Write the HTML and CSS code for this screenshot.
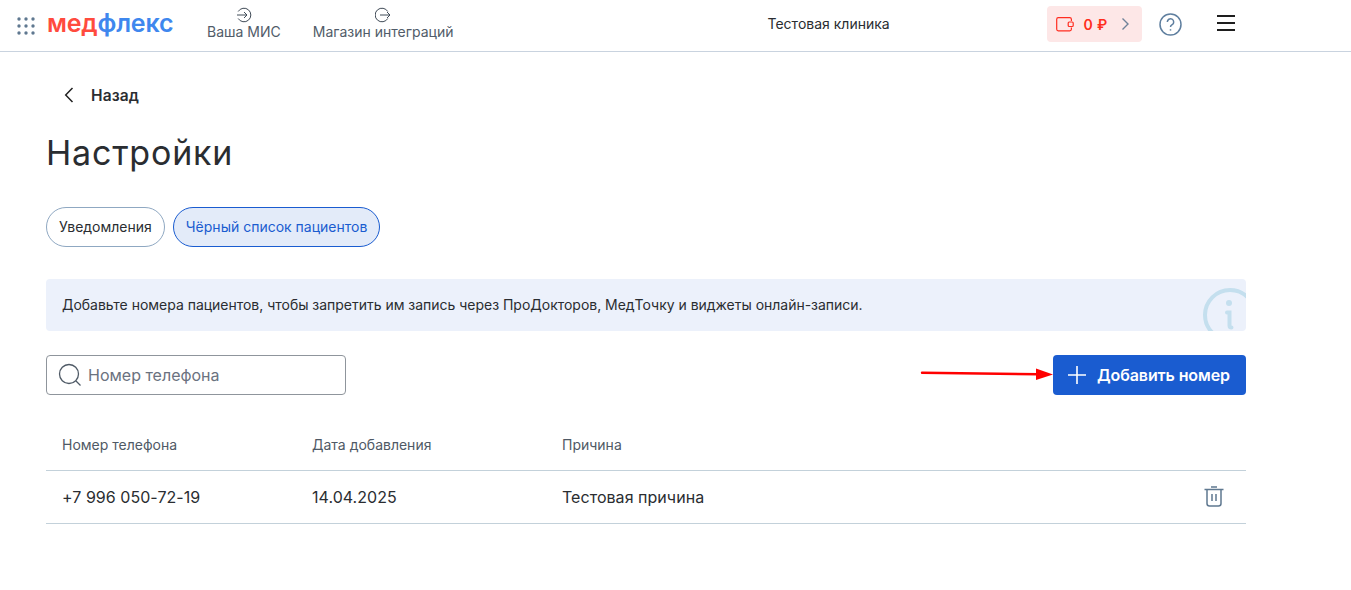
FILE: index.html
```html
<!DOCTYPE html>
<html lang="ru">
<head>
<meta charset="utf-8">
<title>Настройки</title>
<link rel="stylesheet" href="styles.css">
</head>
<body>
<header class="topbar">
  <div class="brand">
    <svg class="apps" width="18" height="18" viewBox="0 0 18 18"><g fill="#5f7890"><circle cx="2" cy="2" r="1.7"/><circle cx="9" cy="2" r="1.7"/><circle cx="16" cy="2" r="1.7"/><circle cx="2" cy="9" r="1.7"/><circle cx="9" cy="9" r="1.7"/><circle cx="16" cy="9" r="1.7"/><circle cx="2" cy="16" r="1.7"/><circle cx="9" cy="16" r="1.7"/><circle cx="16" cy="16" r="1.7"/></g></svg>
    <div class="logo"><span class="logo-red">мед</span><span class="logo-blue">флекс</span></div>
  </div>
  <nav class="nav">
    <a class="nav-item nav-mis">
      <svg width="16" height="16" viewBox="0 0 16 16" fill="none" stroke="#3f4a56" stroke-width="1"><path d="M2.200 4.500A6.800 6.800 0 1 1 2.200 11.500"/><path d="M1 8h10M8 5l3 3-3 3"/></svg>
      <span>Ваша МИС</span>
    </a>
    <a class="nav-item">
      <svg width="16" height="16" viewBox="0 0 16 16" fill="none" stroke="#3f4a56" stroke-width="1"><path d="M12.800 4.500A6.800 6.800 0 1 0 12.800 11.500"/><path d="M5 8h10M12 5l3 3-3 3"/></svg>
      <span>Магазин интеграций</span>
    </a>
  </nav>
  <div class="clinic">Тестовая клиника</div>
  <div class="balance">
    <svg width="18" height="15" viewBox="0 0 18 15" fill="none" stroke="#ff2d20" stroke-width="1.200"><path d="M15.400 4V2.200A1.600 1.600 0 0 0 13.800.7H2.200A1.600 1.600 0 0 0 .7 2.200v10.100a1.600 1.600 0 0 0 1.500 1.500h11.600a1.600 1.600 0 0 0 1.600-1.500V10.500"/><rect x="12.200" y="5" width="5" height="4.500" rx="1"/></svg>
    <span class="amount">0 ₽</span>
    <svg width="9" height="14" viewBox="0 0 9 14" fill="none" stroke="#6f8299" stroke-width="1.400"><path d="M1.500 1.500 7 7l-5.500 5.500"/></svg>
  </div>
  <svg class="help" width="23" height="23" viewBox="0 0 23 23" fill="none" stroke="#5f7f9f" stroke-width="1.500"><circle cx="11.500" cy="11.500" r="10.500"/><path d="M8.300 9a3.200 3.200 0 1 1 4.900 2.700c-1 .6-1.700 1.200-1.700 2.300"/><path d="M11.500 16.200v1.400"/></svg>
  <div class="burger"><i></i><i></i><i></i></div>
</header>

<main class="page">
  <a class="back">
    <svg width="10" height="16" viewBox="0 0 10 16" fill="none" stroke="#222" stroke-width="1.500"><path d="M8.500 1 1.700 8l6.800 7"/></svg>
    <span>Назад</span>
  </a>
  <h1 class="title">Настройки</h1>
  <div class="tabs">
    <button class="tab">Уведомления</button>
    <button class="tab tab-active">Чёрный список пациентов</button>
  </div>
  <div class="notice">
    <span>Добавьте номера пациентов, чтобы запретить им запись через ПроДокторов, МедТочку и виджеты онлайн-записи.</span>
    <svg class="notice-icon" width="44" height="52" viewBox="0 0 44 52" fill="none" stroke="#c4dfee" stroke-width="4"><circle cx="28" cy="36" r="25"/><circle cx="27" cy="24" r="3" fill="#c4dfee" stroke="none"/><path d="M25 33.500h2.500v13q0 2 2 2" stroke-linecap="round"/></svg>
  </div>
  <div class="toolbar">
    <label class="search">
      <svg width="24" height="24" viewBox="0 0 24 24" fill="none" stroke="#4f5a66" stroke-width="1.300"><circle cx="11" cy="11" r="9.500"/><path d="m18 18 4.500 4.500"/></svg>
      <span>Номер телефона</span>
    </label>
    <button class="add">
      <svg width="18" height="18" viewBox="0 0 18 18" stroke="#fff" stroke-width="1.600"><path d="M9 0v18M0 9h18"/></svg>
      <span>Добавить номер</span>
    </button>
  </div>
  <div class="table">
    <div class="row row-head">
      <div>Номер телефона</div><div>Дата добавления</div><div>Причина</div><div></div>
    </div>
    <div class="row row-body">
      <div>+7 996 050-72-19</div><div>14.04.2025</div><div>Тестовая причина</div>
      <div class="cell-action">
        <svg width="20" height="21" viewBox="0 0 20 21" fill="none" stroke="#5f7890" stroke-width="1.500"><path d="M.5 3.500h19M7 1h6"/><path d="M3 3.500v14a2.500 2.500 0 0 0 2.500 2.500h9a2.500 2.500 0 0 0 2.500-2.500v-14"/><path d="M8 8v7M12 8v7"/></svg>
      </div>
    </div>
  </div>
  <svg class="arrow" width="134" height="14" viewBox="0 0 134 14"><path d="M2 5.800 118 7.200" stroke="#f00" stroke-width="2.400" stroke-linecap="round"/><path d="M116 1.500 133 7.500 116 13z" fill="#f00"/></svg>
</main>
</body>
</html>
```
FILE: styles.css
```css
* { box-sizing: border-box; }
html, body { margin: 0; padding: 0; }
body {
  font-family: Inter, "Noto Sans", "Liberation Sans", sans-serif;
  color: #2a2d31;
  background: #fff;
  height: 590px;
  overflow: hidden;
}
button { font-family: inherit; cursor: pointer; }

.topbar {
  display: flex;
  align-items: center;
  height: 52px;
  border-bottom: 1px solid #c9d3df;
  padding-left: 17px;
}
.brand { display: flex; align-items: center; gap: 12px; width: 190px; }
.apps { flex: none; }
.logo { font-size: 25px; font-weight: 600; line-height: 1; letter-spacing: -0.2px; margin-top: -4px; }
.logo-red { color: #ff4b3e; }
.logo-blue { color: #3f87ee; }

.nav { display: flex; gap: 32px; }
.nav-item {
  display: flex;
  flex-direction: column;
  align-items: center;
  gap: 0;
  font-size: 14px;
  line-height: 17px;
  color: #515c69;
  margin-top: -5px;
}
.clinic { font-size: 14px; width: 122px; margin-left: 314px; white-space: nowrap; color: #2a2d31; margin-top: -4px; }
.balance {
  display: flex;
  align-items: center;
  width: 95px;
  height: 36px;
  margin-left: 158px;
  margin-top: -3px;
  padding-left: 9px;
  background: #fde7e7;
  border-radius: 4px;
}
.amount { color: #ff2d20; font-size: 14px; font-weight: 600; margin: 0 13px 0 9px; white-space: nowrap; letter-spacing: .4px; }
.help { margin-left: 17px; margin-top: -3px; flex: none; }
.burger { display: flex; flex-direction: column; gap: 5px; width: 18px; margin-left: 35px; margin-top: -5px; }
.burger i { display: block; height: 2px; background: #1e1e1e; }

.page { position: relative; width: 1200px; margin-left: 46px; padding-top: 33px; }
.back {
  display: flex;
  align-items: center;
  gap: 17px;
  height: 20px;
  margin: 0 0 0 18px;
  font-size: 15.500px;
  font-weight: 600;
  letter-spacing: .1px;
}
.title { margin: 27px 0 0; font-size: 34px; line-height: 42px; font-weight: 400; letter-spacing: .8px; color: #2a2d31; }
.tabs { display: flex; gap: 8px; margin-top: 33px; }
.tab {
  height: 40px;
  padding: 0 12px 2px;
  border: 1px solid #8fa8c2;
  border-radius: 20px;
  background: #fff;
  font-size: 14px;
  color: #2a2d31;
}
.tab-active { background: #e3ebf9; border-color: #1a5cd0; color: #1a5cd0; }

.notice {
  position: relative;
  display: flex;
  align-items: center;
  height: 52px;
  margin-top: 32px;
  padding: 0 0 2px 16px;
  background: #ecf1fb;
  border-radius: 4px;
  font-size: 14px;
  letter-spacing: -.02px;
  overflow: hidden;
}
.notice-icon { position: absolute; right: 0; top: 0; }

.toolbar { display: flex; justify-content: space-between; margin-top: 24px; }
.search {
  display: flex;
  align-items: center;
  gap: 6px;
  width: 300px;
  height: 40px;
  padding-left: 11px;
  border: 1px solid #8f959c;
  border-radius: 4px;
  font-size: 16px;
  color: #6b7280;
}
.add {
  display: flex;
  align-items: center;
  gap: 12px;
  width: 193px;
  height: 40px;
  padding: 0 0 0 15px;
  border: 0;
  border-radius: 4px;
  background: #1a5cd0;
  color: #fff;
  font-size: 16px;
  font-weight: 600;
  letter-spacing: -.1px;
}
.add svg { margin-right: -1px; }

.table { margin-top: 24px; }
.row { display: grid; grid-template-columns: 250px 250px 1fr 64px; padding-left: 16px; align-items: center; }
.row-head { height: 52px; font-size: 14px; color: #4f5965; border-bottom: 1px solid #c3d1da; padding-bottom: 1px; }
.row-body { height: 53px; font-size: 16px; color: #2a2d31; letter-spacing: .04px; border-bottom: 1px solid #c3d1da; }
.cell-action { display: flex; padding-left: 22px; margin-top: -2px; }

.arrow { position: absolute; left: 874px; top: 315px; }
```
